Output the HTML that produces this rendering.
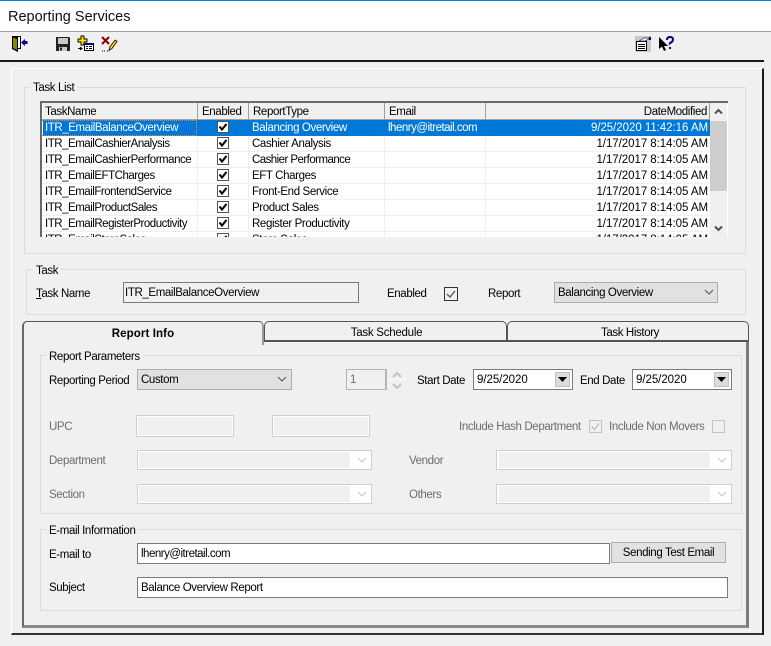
<!DOCTYPE html>
<html><head><meta charset="utf-8">
<style>
html,body{margin:0;padding:0}
body{width:771px;height:646px;position:relative;overflow:hidden;background:#f0f0f0;font-family:"Liberation Sans",sans-serif;font-size:11.5px;letter-spacing:-.38px;color:#000}
div,span,svg{position:absolute;box-sizing:border-box}
.t{white-space:nowrap;line-height:16px;height:16px;margin-top:1px}
.g{color:#6d6d6d}
.gb{border:1px solid #dcdcdc;}
.lg{background:#f0f0f0;padding:0 3px}
.tb{border:1px solid #7a7a7a;background:#fff;line-height:20px;padding-left:3px;white-space:nowrap}
.dis{border:2px solid #cfcfcf;background:#f0f0f0}
.dis2{border:1px solid #cfcfcf;background:#fff}
.cell{height:16px;line-height:16px;white-space:nowrap;padding-left:4px}
.n{letter-spacing:-.48px}
.d{letter-spacing:-.05px}
.v{width:1px;background:#f0f0f0;top:0;height:100%}
.hd{top:2px;height:16px;background:#f0f0f0;border-right:1px solid #a0a0a0;line-height:18px;padding-left:4px;white-space:nowrap}
.tab{top:321px;height:21px;border:1px solid #555;border-bottom:2px solid #555;border-radius:5px 5px 0 0;background:#f0f0f0;text-align:center;line-height:22px}
</style></head><body>
<div style="left:0;top:0;width:771px;height:32px;background:#fff;border-top:1px solid #0f7fd6;border-bottom:1px solid #a0a0a0"></div>
<div class="t" style="left:8px;top:8px;font-size:14.5px;letter-spacing:0;color:#111">Reporting Services</div>
<div style="left:0;top:60px;width:764px;height:2px;background:#1a1a1a"></div>
<!-- icons -->
<svg style="left:11px;top:35px" width="18" height="18" viewBox="0 0 18 18"><path d="M1 1h9v13H7v3L1 14z" fill="#000"/><path d="M2 2.500l4 1.500v11l-4-2z" fill="#8a8a00"/><path d="M7 2h2v11H7z" fill="#fff"/><path d="M10 7.500l4-3.500v2h2.500v3H14v2z" fill="#00008b"/></svg>
<svg style="left:55px;top:36px" width="16" height="16" viewBox="0 0 16 16"><path d="M1 1h13l1 1v13H1z" fill="#222"/><path d="M3 2h10v6H3z" fill="#c9c9c9"/><path d="M4 11h8v4H4z" fill="#c9c9c9"/><path d="M5 11.500h2v3H5z" fill="#222"/></svg>
<svg style="left:77px;top:35px" width="18" height="18" viewBox="0 0 18 18"><path d="M4 1h3v3h3v3H7v3H4V7H1V4h3z" fill="#ffe600" stroke="#000" stroke-width=".9"/><path d="M7.500 8.500h9v7h-9z" fill="#fff" stroke="#000"/><path d="M7 8h10v2H7z" fill="#00008b"/><path d="M9 11h2v1H9zM12 11h3v1h-3zM9 13h2v1H9zM12 13h3v1h-3z" fill="#000"/><path d="M1 13.500h3M3 12l2 1.500-2 1.500" stroke="#000" fill="none"/></svg>
<svg style="left:101px;top:36px" width="17" height="17" viewBox="0 0 17 17"><path d="M1 1l7 7M8 1L1 8" stroke="#8b0000" stroke-width="2" fill="none"/><path d="M14 4l2 1.500-5 7-3 2 .8-3.500z" fill="#ffd800" stroke="#000" stroke-width=".8"/><path d="M3 15h1M6 15h1M1 15h1" stroke="#000"/></svg>
<svg style="left:635px;top:36px" width="16" height="16" viewBox="0 0 16 16"><path d="M0 0h16v16H0z" fill="#c8c8c8"/><path d="M1.500 5.500h10v9h-10z" fill="#fff" stroke="#000"/><path d="M3 8.500h7M3 10.500h7M3 12.500h7" stroke="#000"/><path d="M4 5l5-3h5v1l-4 2z" fill="#fff" stroke="#333" stroke-width=".7"/><path d="M14 1h2v3h-2z" fill="#00008b"/></svg>
<svg style="left:658px;top:36px" width="17" height="17" viewBox="0 0 17 17"><path d="M1 1v12l3-2.500 2 4.500 2-1-2-4h4z" fill="#000"/><path d="M9 4q0-3 3-3t3 2.500q0 2-2 3t-1 2" fill="none" stroke="#00008b" stroke-width="2"/><path d="M11 11h2v2h-2z" fill="#00008b"/></svg>

<!-- main panel -->
<div style="left:11px;top:68px;width:753px;height:567px;border-top:1px solid #fff;border-left:1px solid #fff;border-right:2px solid #1a1a1a;border-bottom:2px solid #333"></div>

<div class="gb" style="left:24px;top:87px;width:722px;height:167px"></div>
<div class="t lg" style="left:30px;top:79px">Task List</div>
<!-- grid -->
<div style="left:40px;top:101px;width:688px;height:136px;background:#fff;overflow:hidden;border-top:2px solid #696969;border-left:2px solid #696969;">
 <div class="hd" style="left:0;top:0;width:156px;border-left:1px solid #fff;padding-left:2px">TaskName</div>
 <div class="hd" style="left:156px;top:0;width:51px">Enabled</div>
 <div class="hd" style="left:207px;top:0;width:136px">ReportType</div>
 <div class="hd" style="left:343px;top:0;width:101px">Email</div>
 <div class="hd" style="left:444px;top:0;width:224px;text-align:right;padding-right:2px">DateModified</div>
 <div style="left:0;top:16px;width:668px;height:1px;background:#a0a0a0"></div>
 <div style="left:1px;top:17px;width:667px;height:16px;background:#0078d7"></div>
 <div class="v" style="left:155px;top:33px"></div><div class="v" style="left:206px;top:33px"></div><div class="v" style="left:342px;top:33px"></div><div class="v" style="left:443px;top:33px"></div>
 <div style="left:0;top:48px;width:668px;height:1px;background:#f0f0f0"></div>
 <div style="left:0;top:64px;width:668px;height:1px;background:#f0f0f0"></div>
 <div style="left:0;top:80px;width:668px;height:1px;background:#f0f0f0"></div>
 <div style="left:0;top:96px;width:668px;height:1px;background:#f0f0f0"></div>
 <div style="left:0;top:112px;width:668px;height:1px;background:#f0f0f0"></div>
 <div style="left:0;top:128px;width:668px;height:1px;background:#f0f0f0"></div>

 <div class="cell" style="left:-1px;top:17px;color:#fff;width:156px;outline:1px dotted #e08a30;outline-offset:-1px;letter-spacing:-.42px">ITR_EmailBalanceOverview</div>
 <div class="cell" style="left:206px;top:17px;color:#fff">Balancing Overview</div>
 <div class="cell" style="left:342px;top:17px;color:#fff;letter-spacing:-.5px">lhenry@itretail.com</div>
 <div class="cell d" style="left:444px;top:17px;width:222px;text-align:right;color:#fff">9/25/2020 11:42:16 AM</div>

 <div class="cell n" style="left:-1px;top:33px">ITR_EmailCashierAnalysis</div>
 <div class="cell" style="left:206px;top:33px">Cashier Analysis</div>
 <div class="cell d" style="left:444px;top:33px;width:222px;text-align:right">1/17/2017 8:14:05 AM</div>
 <div class="cell n" style="left:-1px;top:49px">ITR_EmailCashierPerformance</div>
 <div class="cell" style="left:206px;top:49px;letter-spacing:-.55px">Cashier Performance</div>
 <div class="cell d" style="left:444px;top:49px;width:222px;text-align:right">1/17/2017 8:14:05 AM</div>
 <div class="cell n" style="left:-1px;top:65px">ITR_EmailEFTCharges</div>
 <div class="cell" style="left:206px;top:65px">EFT Charges</div>
 <div class="cell d" style="left:444px;top:65px;width:222px;text-align:right">1/17/2017 8:14:05 AM</div>
 <div class="cell n" style="left:-1px;top:81px">ITR_EmailFrontendService</div>
 <div class="cell" style="left:206px;top:81px">Front-End Service</div>
 <div class="cell d" style="left:444px;top:81px;width:222px;text-align:right">1/17/2017 8:14:05 AM</div>
 <div class="cell n" style="left:-1px;top:97px">ITR_EmailProductSales</div>
 <div class="cell" style="left:206px;top:97px">Product Sales</div>
 <div class="cell d" style="left:444px;top:97px;width:222px;text-align:right">1/17/2017 8:14:05 AM</div>
 <div class="cell n" style="left:-1px;top:113px">ITR_EmailRegisterProductivity</div>
 <div class="cell" style="left:206px;top:113px">Register Productivity</div>
 <div class="cell d" style="left:444px;top:113px;width:222px;text-align:right">1/17/2017 8:14:05 AM</div>
 <div class="cell n" style="left:-1px;top:129px">ITR_EmailStoreSales</div>
 <div class="cell" style="left:206px;top:129px">Store Sales</div>
 <div class="cell d" style="left:444px;top:129px;width:222px;text-align:right">1/17/2017 8:14:05 AM</div>

 <!-- checks -->
 <svg style="left:175px;top:18px" width="12" height="12" viewBox="0 0 12 12"><rect x=".5" y=".5" width="11" height="11" fill="#fff" stroke="#555"/><path d="M2.500 5.500l2.500 3L9.500 3" stroke="#000" stroke-width="2" fill="none"/></svg>
 <svg style="left:175px;top:34px" width="12" height="12" viewBox="0 0 12 12"><rect x=".5" y=".5" width="11" height="11" fill="#fff" stroke="#555"/><path d="M2.500 5.500l2.500 3L9.500 3" stroke="#000" stroke-width="2" fill="none"/></svg>
 <svg style="left:175px;top:50px" width="12" height="12" viewBox="0 0 12 12"><rect x=".5" y=".5" width="11" height="11" fill="#fff" stroke="#555"/><path d="M2.500 5.500l2.500 3L9.500 3" stroke="#000" stroke-width="2" fill="none"/></svg>
 <svg style="left:175px;top:66px" width="12" height="12" viewBox="0 0 12 12"><rect x=".5" y=".5" width="11" height="11" fill="#fff" stroke="#555"/><path d="M2.500 5.500l2.500 3L9.500 3" stroke="#000" stroke-width="2" fill="none"/></svg>
 <svg style="left:175px;top:82px" width="12" height="12" viewBox="0 0 12 12"><rect x=".5" y=".5" width="11" height="11" fill="#fff" stroke="#555"/><path d="M2.500 5.500l2.500 3L9.500 3" stroke="#000" stroke-width="2" fill="none"/></svg>
 <svg style="left:175px;top:98px" width="12" height="12" viewBox="0 0 12 12"><rect x=".5" y=".5" width="11" height="11" fill="#fff" stroke="#555"/><path d="M2.500 5.500l2.500 3L9.500 3" stroke="#000" stroke-width="2" fill="none"/></svg>
 <svg style="left:175px;top:114px" width="12" height="12" viewBox="0 0 12 12"><rect x=".5" y=".5" width="11" height="11" fill="#fff" stroke="#555"/><path d="M2.500 5.500l2.500 3L9.500 3" stroke="#000" stroke-width="2" fill="none"/></svg>
 <svg style="left:175px;top:130px" width="12" height="12" viewBox="0 0 12 12"><rect x=".5" y=".5" width="11" height="11" fill="#fff" stroke="#555"/><path d="M2.500 5.500l2.500 3L9.500 3" stroke="#000" stroke-width="2" fill="none"/></svg>

 <!-- scrollbar -->
 <div style="left:668px;top:0;width:17px;height:134px;background:#f0f0f0"></div>
 <div style="left:668px;top:18px;width:17px;height:70px;background:#cdcdcd"></div>
 <svg style="left:668px;top:0" width="17" height="17" viewBox="0 0 17 17"><path d="M5 10.500l3.500-3.500 3.500 3.500" stroke="#505050" stroke-width="2" fill="none"/></svg>
 <svg style="left:668px;top:117px" width="17" height="17" viewBox="0 0 17 17"><path d="M5 6.500l3.500 3.500 3.500-3.500" stroke="#505050" stroke-width="2" fill="none"/></svg>
</div>

<!-- Task group -->
<div class="gb" style="left:26px;top:269px;width:720px;height:46px"></div>
<div class="t lg" style="left:33px;top:262px">Task</div>
<div class="t" style="left:36px;top:285px"><u>T</u>ask Name</div>
<div class="tb" style="left:123px;top:282px;width:236px;height:21px;background:#f0f0f0;line-height:20px;padding-left:1px">ITR_EmailBalanceOverview</div>
<div class="t" style="left:387px;top:285px">Enabled</div>
<svg style="left:444px;top:287px" width="14" height="14" viewBox="0 0 14 14"><rect x=".5" y=".5" width="13" height="13" fill="#f0f0f0" stroke="#333"/><path d="M3 7l3 3 5-6" stroke="#555" stroke-width="1.300" fill="none"/></svg>
<div class="t" style="left:488px;top:285px">Report</div>
<div style="left:554px;top:282px;width:164px;height:21px;background:#e1e1e1;border:1px solid #adadad;line-height:21px;padding-left:3px;white-space:nowrap">Balancing Overview</div>
<svg style="left:704px;top:288px" width="10" height="8" viewBox="0 0 10 8"><path d="M1 2l4 4 4-4" stroke="#555" fill="none"/></svg>

<!-- tab body -->
<div style="left:22px;top:341px;width:727px;height:287px;background:#f0f0f0;border-left:2px solid #696969;border-right:3px solid #7a7a7a;border-bottom:3px solid #8a8a8a;border-top:0"></div>
<div class="tab" style="left:264px;width:243px;padding-left:2px;letter-spacing:-.25px">Task Schedule</div>
<div class="tab" style="left:507px;width:242px;padding-left:4px">Task History</div>
<div class="tab" style="left:22px;width:242px;height:24px;border-bottom:0;border-left:2px solid #696969;border-right:2px solid #9a9a9a;font-weight:bold;z-index:2;line-height:24px;letter-spacing:.1px">Report Info</div>

<!-- report parameters -->
<div class="gb" style="left:40px;top:355px;width:702px;height:159px"></div>
<div class="t lg" style="left:46px;top:348px">Report Parameters</div>
<div class="t" style="left:49px;top:372px">Reporting Period</div>
<div style="left:137px;top:369px;width:155px;height:21px;background:#e1e1e1;border:1px solid #adadad;line-height:21px;padding-left:3px">Custom</div>
<svg style="left:277px;top:375px" width="10" height="8" viewBox="0 0 10 8"><path d="M1 2l4 4 4-4" stroke="#555" fill="none"/></svg>
<div style="left:346px;top:369px;width:41px;height:21px;border:1px solid #b5b5b5;border-right-width:2px;line-height:21px;padding-left:3px;color:#6d6d6d;">1</div>
<div style="left:387px;top:379px;width:20px;height:1px;background:#fff"></div>
<svg style="left:391px;top:371px" width="12" height="19" viewBox="0 0 12 19"><path d="M2 6l4-4 4 4M2 13l4 4 4-4" stroke="#c4c4c4" stroke-width="2" fill="none"/></svg>
<div class="t" style="left:417px;top:372px">Start Date</div>
<div class="tb d" style="left:473px;top:369px;width:100px;height:21px">9/25/2020</div>
<div style="left:555px;top:372px;width:15px;height:15px;background:#dcdcdc;border:1px solid #c0c0c0"></div>
<svg style="left:557px;top:376px" width="11" height="7" viewBox="0 0 11 7"><path d="M1 1h9L5.500 6z" fill="#000"/></svg>
<div class="t" style="left:580px;top:372px">End Date</div>
<div class="tb d" style="left:632px;top:369px;width:100px;height:21px">9/25/2020</div>
<div style="left:714px;top:372px;width:15px;height:15px;background:#dcdcdc;border:1px solid #c0c0c0"></div>
<svg style="left:716px;top:376px" width="11" height="7" viewBox="0 0 11 7"><path d="M1 1h9L5.500 6z" fill="#000"/></svg>

<div class="t g" style="left:49px;top:418px">UPC</div>
<div class="dis" style="left:136px;top:415px;width:98px;height:22px;border-width:1px;box-shadow:inset 0 0 0 1px #fff"></div>
<div class="dis" style="left:272px;top:415px;width:98px;height:22px;border-width:1px;box-shadow:inset 0 0 0 1px #fff"></div>
<div class="t g" style="left:459px;top:418px">Include Hash Department</div>
<svg style="left:589px;top:420px" width="13" height="13" viewBox="0 0 13 13"><rect x=".5" y=".5" width="12" height="12" fill="#f0f0f0" stroke="#c4c4c4"/><path d="M2.500 6.500l3 3 4.500-6" stroke="#bdbdbd" stroke-width="1.300" fill="none"/></svg>
<div class="t g" style="left:609px;top:418px">Include Non Movers</div>
<div style="left:712px;top:420px;width:13px;height:13px;border:1px solid #c4c4c4"></div>

<div class="t g" style="left:49px;top:452px">Department</div>
<div class="dis2" style="left:137px;top:450px;width:235px;height:20px"></div><div style="left:139px;top:452px;width:211px;height:16px;background:#f0f0f0"></div>
<svg style="left:357px;top:456px" width="10" height="8" viewBox="0 0 10 8"><path d="M1 2l4 4 4-4" stroke="#c4c4c4" fill="none"/></svg>
<div class="t g" style="left:409px;top:452px">Vendor</div>
<div class="dis2" style="left:496px;top:450px;width:236px;height:20px"></div><div style="left:499px;top:452px;width:211px;height:16px;background:#f0f0f0"></div>
<svg style="left:717px;top:456px" width="10" height="8" viewBox="0 0 10 8"><path d="M1 2l4 4 4-4" stroke="#c4c4c4" fill="none"/></svg>
<div class="t g" style="left:49px;top:486px">Section</div>
<div class="dis2" style="left:137px;top:484px;width:235px;height:20px"></div><div style="left:139px;top:486px;width:211px;height:16px;background:#f0f0f0"></div>
<svg style="left:357px;top:490px" width="10" height="8" viewBox="0 0 10 8"><path d="M1 2l4 4 4-4" stroke="#c4c4c4" fill="none"/></svg>
<div class="t g" style="left:409px;top:486px">Others</div>
<div class="dis2" style="left:496px;top:484px;width:236px;height:20px"></div><div style="left:499px;top:486px;width:211px;height:16px;background:#f0f0f0"></div>
<svg style="left:717px;top:490px" width="10" height="8" viewBox="0 0 10 8"><path d="M1 2l4 4 4-4" stroke="#c4c4c4" fill="none"/></svg>

<!-- email -->
<div class="gb" style="left:40px;top:529px;width:702px;height:82px"></div>
<div class="t lg" style="left:46px;top:522px">E-mail Information</div>
<div class="t" style="left:49px;top:546px">E-mail to</div>
<div class="tb" style="left:137px;top:543px;width:473px;height:21px;letter-spacing:-.5px">lhenry@itretail.com</div>
<div style="left:611px;top:542px;width:115px;height:21px;background:#e1e1e1;border:1px solid #adadad;text-align:center;line-height:21px">Sending Test Email</div>
<div class="t" style="left:49px;top:579px">Subject</div>
<div class="tb" style="left:137px;top:577px;width:591px;height:21px">Balance Overview Report</div>
</body></html>
